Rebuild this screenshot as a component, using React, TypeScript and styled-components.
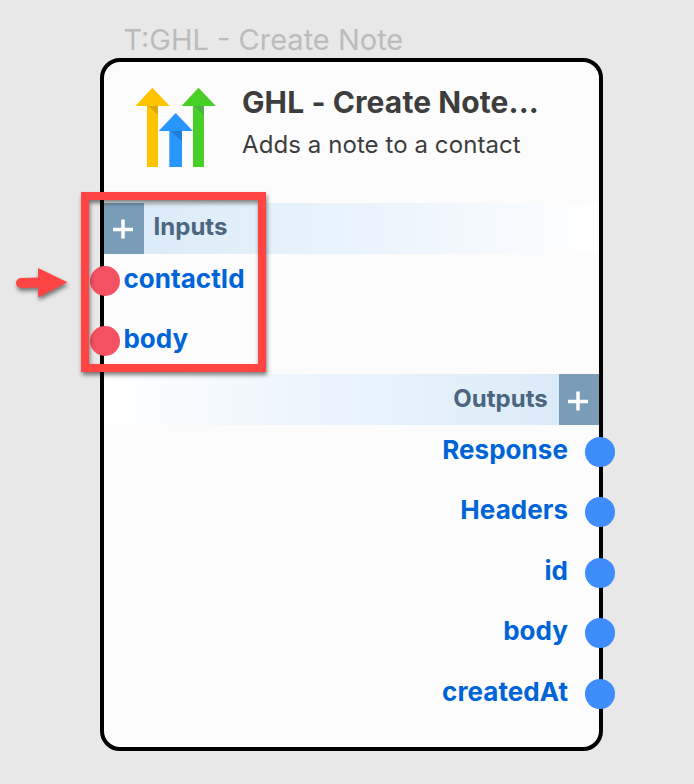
import React from "react";
import styled, { createGlobalStyle } from "styled-components";

const GlobalStyle = createGlobalStyle`
  *, *::before, *::after { box-sizing: border-box; }
  body {
    margin: 0;
    background: #e8e8e8;
    font-family: Inter, "Liberation Sans", sans-serif;
    overflow: hidden;
  }
`;

const Canvas = styled.main`
  position: relative;
  width: 694px;
  height: 784px;
  padding: 22px 0 0 100px;
`;

const NodeCaption = styled.div`
  height: 36px;
  padding-left: 23.4px;
  font-size: 29px;
  line-height: 36px;
  color: #bcbcbc;
  white-space: nowrap;
`;

const NodeCard = styled.section`
  width: 503.4px;
  height: 693px;
  border: 4px solid #000;
  border-radius: 20px;
  background: #fcfcfc;
`;

const CardHeader = styled.header`
  display: flex;
  height: 141px;
  padding: 25px 0 0 31px;
`;

const Logo = styled.svg`
  flex: none;
  width: 82px;
  height: 81px;
`;

const HeaderText = styled.div`
  padding-left: 25px;
  white-space: nowrap;
  color: #3d3d3d;
`;

const CardTitle = styled.h1`
  margin: -3px 0 0;
  font-size: 30px;
  line-height: 36px;
  font-weight: 700;
  letter-spacing: 0.1px;
`;

const CardDescription = styled.p`
  margin: 8px 0 0;
  font-size: 24px;
  line-height: 34px;
  letter-spacing: 0.08px;
`;

type Side = "left" | "right";

const SectionBar = styled.div<{ $side: Side }>`
  display: flex;
  flex-direction: ${(p) => (p.$side === "left" ? "row" : "row-reverse")};
  height: 50.5px;
  gap: ${(p) => (p.$side === "left" ? 9.6 : 11)}px;
  background: linear-gradient(
    to ${(p) => (p.$side === "left" ? "right" : "left")},
    #d8e9f7 0%, #e4f1fa 33%, #edf5fd 60%, #ffffff 100%
  );
`;

const AddButton = styled.button<{ $side: Side }>`
  flex: none;
  display: grid;
  place-items: center;
  width: ${(p) => (p.$side === "left" ? 40 : 40.7)}px;
  padding: ${(p) => (p.$side === "left" ? "2px 2px 0 0" : "4px 2px 0 0")};
  border: 0;
  background: #799cb7;
`;

const SectionLabel = styled.h2<{ $side: Side }>`
  margin: 0;
  font-size: 24px;
  line-height: ${(p) => (p.$side === "left" ? 47 : 49)}px;
  font-weight: 700;
  color: #4c6580;
`;

const PortList = styled.ul<{ $side: Side }>`
  margin: 0;
  padding: 12px 0 0;
  height: ${(p) => (p.$side === "left" ? "120.5px" : "auto")};
  list-style: none;
`;

const PortRow = styled.li<{ $side: Side }>`
  display: flex;
  flex-direction: ${(p) => (p.$side === "left" ? "row" : "row-reverse")};
  align-items: flex-start;
  height: ${(p) => (p.$side === "left" ? 60.4 : 60.5)}px;
  gap: ${(p) => (p.$side === "left" ? 3.2 : 16.8)}px;
  margin-left: ${(p) => (p.$side === "left" ? -14 : 0)}px;
  margin-right: ${(p) => (p.$side === "right" ? -16 : 0)}px;
`;

const PortDot = styled.span<{ $side: Side }>`
  flex: none;
  width: ${(p) => (p.$side === "left" ? 30.2 : 30.6)}px;
  height: 30.4px;
  border-radius: 50%;
  background: ${(p) => (p.$side === "left" ? "#f45162" : "#3f8cfc")};
`;

const PortName = styled.span`
  font-size: 26px;
  line-height: 26px;
  font-weight: 700;
  letter-spacing: 0.05px;
  color: #0064d9;
`;

const Highlight = styled.div`
  position: absolute;
  left: 81px;
  top: 192px;
  width: 185px;
  height: 180px;
  border: 8px solid #ff4444;
  filter: drop-shadow(1px 3px 2px rgba(0, 0, 0, 0.5));
`;

const Pointer = styled.svg`
  position: absolute;
  left: 10px;
  top: 262px;
  width: 64px;
  height: 46px;
  filter: drop-shadow(1px 3px 2px rgba(0, 0, 0, 0.5));
`;

const PlusIcon = () => (
  <svg width="20" height="20" viewBox="0 0 20 20" aria-hidden="true">
    <path d="M0 10.5H20M10 0.5V19.5" stroke="#fff" strokeWidth="3.5" />
  </svg>
);

function Section({ side, label }: { side: Side; label: string }) {
  return (
    <SectionBar $side={side}>
      <AddButton $side={side} aria-label={`Add ${label}`}>
        <PlusIcon />
      </AddButton>
      <SectionLabel $side={side}>{label}</SectionLabel>
    </SectionBar>
  );
}

function Ports({ side, names }: { side: Side; names: string[] }) {
  return (
    <PortList $side={side}>
      {names.map((name) => (
        <PortRow key={name} $side={side}>
          <PortDot $side={side} />
          <PortName>{name}</PortName>
        </PortRow>
      ))}
    </PortList>
  );
}

export default function App() {
  return (
    <>
      <GlobalStyle />
      <Canvas>
        <NodeCaption>T:GHL - Create Note</NodeCaption>
        <NodeCard>
          <CardHeader>
            <Logo viewBox="135 87 82 81">
              <path d="M135.3 106L152.4 87.8L169.7 106H158V167H147V106Z" fill="#ffc400" />
              <path d="M148 106H158V115Z" fill="#d9a80b" />
              <path d="M158.7 131L175.7 113L192.9 131H182V167H169.3V131Z" fill="#2995ff" />
              <path d="M170 131H182V141.5Z" fill="#1e7fdc" />
              <path d="M181.5 106L198.5 87.8L215.8 106H204V167H193V106Z" fill="#48cf27" />
              <path d="M194 106H204V115Z" fill="#4bb047" />
            </Logo>
            <HeaderText>
              <CardTitle>GHL - Create Note...</CardTitle>
              <CardDescription>Adds a note to a contact</CardDescription>
            </HeaderText>
          </CardHeader>
          <Section side="left" label="Inputs" />
          <Ports side="left" names={["contactId", "body"]} />
          <Section side="right" label="Outputs" />
          <Ports side="right" names={["Response", "Headers", "id", "body", "createdAt"]} />
        </NodeCard>
        <Highlight />
        <Pointer viewBox="10 262 64 46" aria-hidden="true">
          <path
            d="M21 278L38 277.6V268L67.5 282.3L38 297.5V287.4L21 288A5 5 0 0 1 21 278Z"
            fill="#ff4444"
          />
        </Pointer>
      </Canvas>
    </>
  );
}
